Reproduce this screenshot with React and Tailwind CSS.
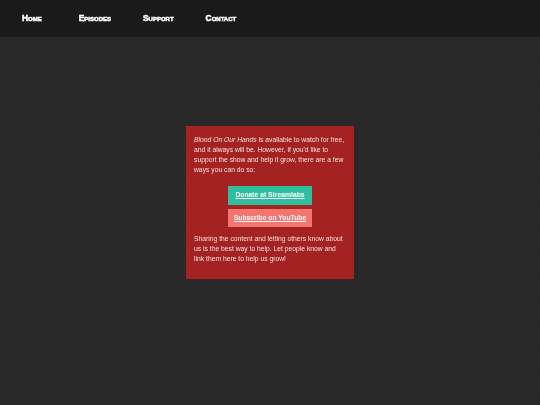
const links = ['Home', 'Episodes', 'Support', 'Contact'];

const App = () => {
  return (
    <div className="h-[405px] overflow-hidden bg-[#282828] bg-[radial-gradient(#2c2c2c_1px,transparent_1px)] bg-[length:3px_3px] font-['Liberation_Sans',sans-serif] flex flex-col blur-[0.3px]">
      <nav className="h-[37px] shrink-0 bg-[#1a1a1a] flex items-center pl-[22px] gap-[32px]">
        {links.map((link, i) => (
          <a key={link} className={`text-[8.4px] leading-none font-black text-white [font-variant:small-caps] [-webkit-text-stroke:0.5px_white] ${i === 0 ? 'mr-[5px]' : ''}`}>
            {link}
          </a>
        ))}
      </nav>

      <div className="flex-1 flex justify-center pt-[89px]">
        <div className="w-[168px] h-[153px] bg-[#a52222] px-[8px] pt-[9px] text-[6.75px] leading-[10px] text-[#f3dede]">
          <p>
            <em>Blood On Our Hands</em> is available to watch for free, and it always will be. However, if you'd like to support the show and help it grow, there are a few ways you can do so:
          </p>
          <div className="flex flex-col items-center gap-[4px] mt-[11px] mb-[7px]">
            <a className="w-[84px] h-[18.5px] flex items-center justify-center bg-[#2fbf9f] text-white font-bold underline">
              Donate at Streamlabs
            </a>
            <a className="w-[84px] h-[18.5px] flex items-center justify-center bg-[#f2756f] text-white font-bold underline">
              Subscribe on YouTube
            </a>
          </div>
          <p>
            Sharing the content and letting others know about us is the best way to help. Let people know and link them here to help us grow!
          </p>
        </div>
      </div>
    </div>
  );
};

export default App;
